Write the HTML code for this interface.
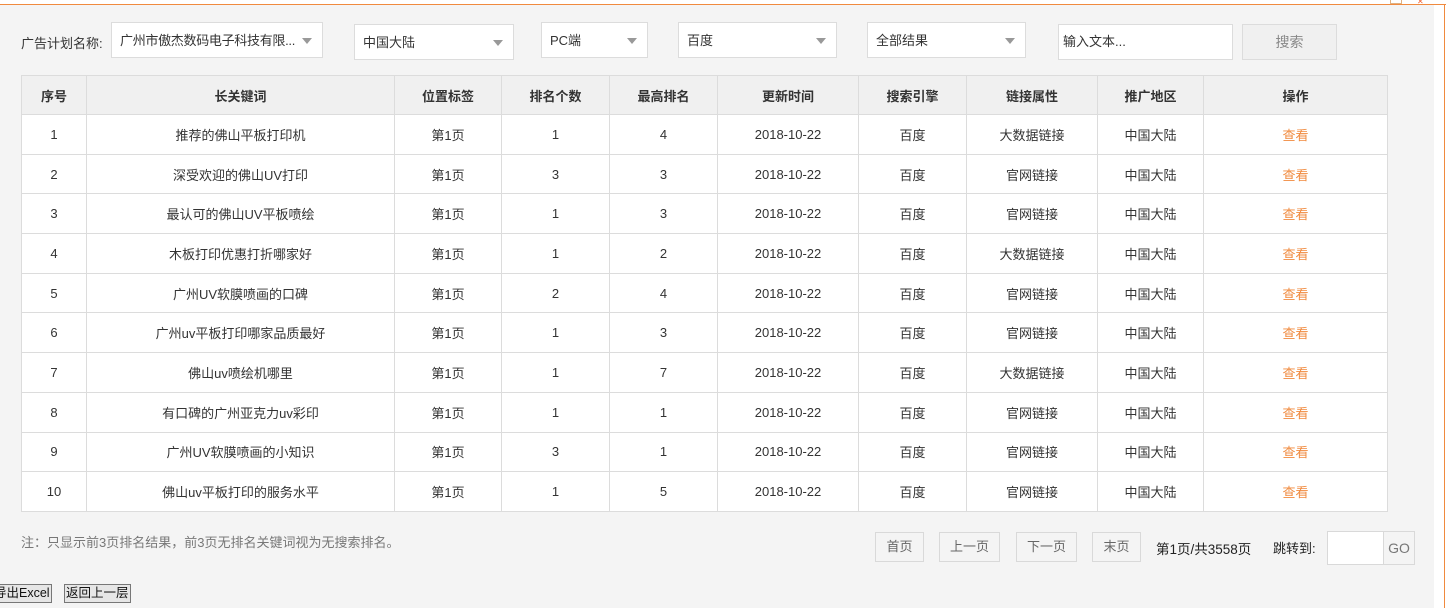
<!DOCTYPE html>
<html><head><meta charset="utf-8"><style>
*{box-sizing:border-box;margin:0;padding:0}
body{width:1446px;height:608px;background:#fff;font-family:"Liberation Sans","Noto Sans CJK SC",sans-serif;font-size:13px;color:#333;position:relative;overflow:hidden}
.bg{position:absolute;left:0;top:4px;width:1434px;height:604px;background:#f4f4f4;border-top:1px solid #f08a3e}
.topline{position:absolute;left:0;top:4px;width:1446px;height:1px;background:#f08a3e}
.rline{position:absolute;left:1444px;top:4px;width:1px;height:604px;background:#f08a3e}
.a{position:absolute}
.sel{position:absolute;background:#fff;border:1px solid #dcdcdc;height:36px;line-height:36px;padding-left:8px;font-size:13px;color:#333}
.sel:after{content:"";position:absolute;right:10px;top:15px;border:5px solid transparent;border-top:6px solid #999;border-bottom:0}
table{position:absolute;left:21px;top:75px;border-collapse:collapse;background:#fff;font-size:13px;table-layout:fixed;width:1366px}
td,th{border:1px solid #dcdcdc;text-align:center;height:39.7px;padding:0}
th{background:#f0f0f0;font-weight:bold;height:39px}
td.o{color:#f08a3e}
.pb{position:absolute;border:1px solid #d9d9d9;height:30px;line-height:28px;text-align:center;color:#666;background:#f4f4f4}
.btn{position:absolute;border:1px solid #777;background:#e6e6e6;height:19px;line-height:17px;font-size:12.5px;color:#111;padding:0 1px}
</style></head><body>
<div class="bg"></div><div class="topline"></div><div class="rline"></div>
<div class="a" style="left:1390px;top:0;width:12px;height:4px;border:1px solid #e0b080;border-top:0"></div>
<div class="a" style="left:1417px;top:0;width:12px;height:4px;color:#f06030;font-size:8px;line-height:4px">✕</div>
<div class="a" style="left:21px;top:33px">广告计划名称:</div>
<div class="sel" style="left:111px;top:22px;width:212px;letter-spacing:-0.3px">广州市傲杰数码电子科技有限...</div>
<div class="sel" style="left:354px;top:24px;width:160px">中国大陆</div>
<div class="sel" style="left:541px;top:22px;width:107px">PC端</div>
<div class="sel" style="left:678px;top:22px;width:159px">百度</div>
<div class="sel" style="left:867px;top:22px;width:159px">全部结果</div>
<div class="a" style="left:1058px;top:24px;width:175px;height:36px;background:#fff;border:1px solid #dcdcdc;line-height:34px;padding-left:4px">输入文本...</div>
<div class="a" style="left:1242px;top:24px;width:95px;height:36px;background:#f0f0f0;border:1px solid #dcdcdc;line-height:34px;text-align:center;color:#888;font-size:14px">搜索</div>
<table>
<colgroup><col style="width:65px"><col style="width:308px"><col style="width:107px"><col style="width:108px"><col style="width:108px"><col style="width:141px"><col style="width:108px"><col style="width:131px"><col style="width:106px"><col style="width:184px"></colgroup>
<tr><th>序号</th><th>长关键词</th><th>位置标签</th><th>排名个数</th><th>最高排名</th><th>更新时间</th><th>搜索引擎</th><th>链接属性</th><th>推广地区</th><th>操作</th></tr>
<tr><td>1</td><td>推荐的佛山平板打印机</td><td>第1页</td><td>1</td><td>4</td><td>2018-10-22</td><td>百度</td><td>大数据链接</td><td>中国大陆</td><td class="o">查看</td></tr>
<tr><td>2</td><td>深受欢迎的佛山UV打印</td><td>第1页</td><td>3</td><td>3</td><td>2018-10-22</td><td>百度</td><td>官网链接</td><td>中国大陆</td><td class="o">查看</td></tr>
<tr><td>3</td><td>最认可的佛山UV平板喷绘</td><td>第1页</td><td>1</td><td>3</td><td>2018-10-22</td><td>百度</td><td>官网链接</td><td>中国大陆</td><td class="o">查看</td></tr>
<tr><td>4</td><td>木板打印优惠打折哪家好</td><td>第1页</td><td>1</td><td>2</td><td>2018-10-22</td><td>百度</td><td>大数据链接</td><td>中国大陆</td><td class="o">查看</td></tr>
<tr><td>5</td><td>广州UV软膜喷画的口碑</td><td>第1页</td><td>2</td><td>4</td><td>2018-10-22</td><td>百度</td><td>官网链接</td><td>中国大陆</td><td class="o">查看</td></tr>
<tr><td>6</td><td>广州uv平板打印哪家品质最好</td><td>第1页</td><td>1</td><td>3</td><td>2018-10-22</td><td>百度</td><td>官网链接</td><td>中国大陆</td><td class="o">查看</td></tr>
<tr><td>7</td><td>佛山uv喷绘机哪里</td><td>第1页</td><td>1</td><td>7</td><td>2018-10-22</td><td>百度</td><td>大数据链接</td><td>中国大陆</td><td class="o">查看</td></tr>
<tr><td>8</td><td>有口碑的广州亚克力uv彩印</td><td>第1页</td><td>1</td><td>1</td><td>2018-10-22</td><td>百度</td><td>官网链接</td><td>中国大陆</td><td class="o">查看</td></tr>
<tr><td>9</td><td>广州UV软膜喷画的小知识</td><td>第1页</td><td>3</td><td>1</td><td>2018-10-22</td><td>百度</td><td>官网链接</td><td>中国大陆</td><td class="o">查看</td></tr>
<tr><td>10</td><td>佛山uv平板打印的服务水平</td><td>第1页</td><td>1</td><td>5</td><td>2018-10-22</td><td>百度</td><td>官网链接</td><td>中国大陆</td><td class="o">查看</td></tr>
</table>
<div class="a" style="left:21px;top:532px;color:#777">注：只显示前3页排名结果，前3页无排名关键词视为无搜索排名。</div>
<div class="pb" style="left:875px;top:532px;width:49px">首页</div>
<div class="pb" style="left:939px;top:532px;width:61px">上一页</div>
<div class="pb" style="left:1016px;top:532px;width:61px">下一页</div>
<div class="pb" style="left:1092px;top:532px;width:49px">末页</div>
<div class="a" style="left:1156px;top:538px;color:#222;font-size:13.5px">第1页/共3558页</div>
<div class="a" style="left:1273px;top:538px;color:#222">跳转到:</div>
<div class="a" style="left:1327px;top:531px;width:88px;height:34px;background:#fff;border:1px solid #d9d9d9"></div>
<div class="a" style="left:1383px;top:531px;width:32px;height:34px;border:1px solid #d9d9d9;background:#f4f4f4;line-height:32px;text-align:center;color:#777;font-size:14px">GO</div>
<div class="btn" style="left:-8px;top:584px">导出Excel</div>
<div class="btn" style="left:64px;top:584px">返回上一层</div>
</body></html>
